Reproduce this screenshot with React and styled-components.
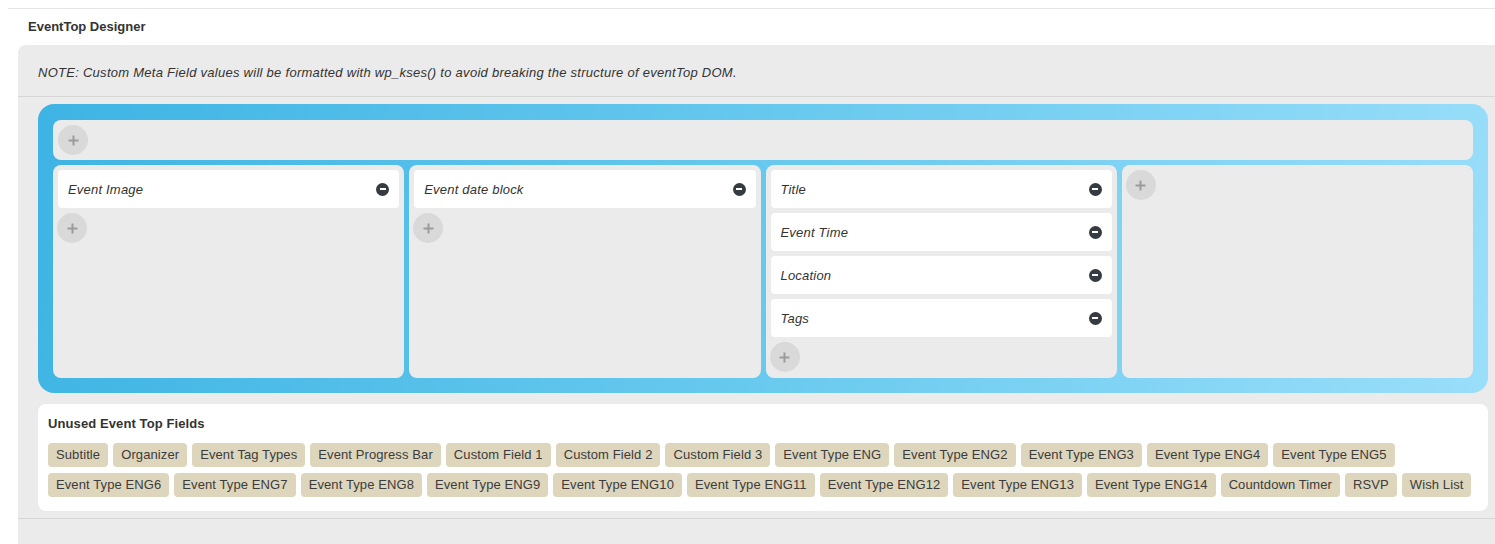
import React from 'react';
import styled, { createGlobalStyle } from 'styled-components';

const GlobalStyle = createGlobalStyle`
  body {
    margin: 0;
    background: #fff;
    font-family: "Liberation Sans", Arial, sans-serif;
    color: #333;
  }
`;

const Page = styled.div`
  padding: 8px 0 0 8px;
`;

const Section = styled.div`
  border-top: 1px solid #e6e6e6;
`;

const Heading = styled.h3`
  margin: 0;
  padding: 0 0 0 20px;
  height: 36px;
  line-height: 35px;
  font-size: 13px;
  font-weight: bold;
  color: #333;
`;

const Panel = styled.div`
  margin-left: 10px;
  background: #ebebeb;
  border-top-left-radius: 8px;
`;

const Note = styled.p`
  margin: 0;
  padding: 20px 20px 15px;
  line-height: 16px;
  font-size: 13px;
  font-style: italic;
  letter-spacing: 0.27px;
  color: #333;
  border-bottom: 1px solid #d6d6d6;
`;

const Body = styled.div`
  padding: 7px 7px 7px 20px;
  border-bottom: 1px solid #d6d6d6;
`;

const Designer = styled.div`
  padding: 16px 15px 15px;
  border-radius: 16px;
  background: linear-gradient(100deg, #3eb4e4 0%, #6ccbef 55%, #9adefa 100%);
`;

const TopRow = styled.div`
  display: flex;
  padding: 5px;
  border-radius: 8px;
  background: #ebebeb;
`;

const Columns = styled.div`
  display: grid;
  grid-template-columns: repeat(4, 1fr);
  gap: 5px;
  margin-top: 5px;
`;

const Column = styled.div`
  display: flex;
  flex-direction: column;
  align-items: flex-start;
  gap: 5px;
  padding: 5px 5px 5px 4px;
  min-height: 203px;
  border-radius: 8px;
  background: #ebebeb;
`;

const Field = styled.div`
  display: flex;
  align-items: center;
  justify-content: space-between;
  align-self: stretch;
  height: 38px;
  margin-left: 1px;
  padding: 0 10px 0 10px;
  border-radius: 4px;
  background: #fff;
  font-size: 13px;
  font-style: italic;
  letter-spacing: 0.2px;
  color: #333;
`;

const Minus = styled.span`
  position: relative;
  width: 13px;
  height: 13px;
  border-radius: 50%;
  background: #363b42;

  &:after {
    content: '';
    position: absolute;
    left: 3.5px;
    top: 5.5px;
    width: 6px;
    height: 2px;
    background: #fff;
  }
`;

const AddButton = styled.span`
  display: flex;
  align-items: center;
  justify-content: center;
  width: 30px;
  height: 30px;
  border-radius: 50%;
  background: #d9d9d9;
`;

const Unused = styled.div`
  margin-top: 11px;
  padding: 12px 10px 14px;
  border-radius: 8px;
  background: #fff;
`;

const UnusedTitle = styled.div`
  font-size: 13px;
  font-weight: bold;
  line-height: 16px;
  letter-spacing: 0.1px;
  color: #333;
  margin-bottom: 11px;
`;

const TagRow = styled.div`
  display: flex;
  gap: 5px;
  & + & {
    margin-top: 6px;
  }
`;

const Tag = styled.span`
  height: 24px;
  line-height: 24px;
  padding: 0 8px;
  border-radius: 4px;
  background: #ddd5bc;
  font-size: 13px;
  letter-spacing: 0.1px;
  color: #3c3c3c;
  white-space: nowrap;
`;

const Foot = styled.div`
  height: 26px;
`;

const Plus = () => (
  <AddButton>
    <svg width="11" height="11" viewBox="0 0 11 11">
      <path d="M5.5 0.5v10M0.5 5.5h10" stroke="#9b9b9b" strokeWidth="2" />
    </svg>
  </AddButton>
);

const columns = [
  ['Event Image'],
  ['Event date block'],
  ['Title', 'Event Time', 'Location', 'Tags'],
  [],
];

const tagRows = [
  [
    'Subtitle', 'Organizer', 'Event Tag Types', 'Event Progress Bar', 'Custom Field 1',
    'Custom Field 2', 'Custom Field 3', 'Event Type ENG', 'Event Type ENG2',
    'Event Type ENG3', 'Event Type ENG4', 'Event Type ENG5',
  ],
  [
    'Event Type ENG6', 'Event Type ENG7', 'Event Type ENG8', 'Event Type ENG9',
    'Event Type ENG10', 'Event Type ENG11', 'Event Type ENG12', 'Event Type ENG13',
    'Event Type ENG14', 'Countdown Timer', 'RSVP', 'Wish List',
  ],
];

const App = () => (
  <Page>
    <GlobalStyle />
    <Section>
      <Heading>EventTop Designer</Heading>
      <Panel>
        <Note>
          NOTE: Custom Meta Field values will be formatted with wp_kses() to avoid breaking the structure of eventTop DOM.
        </Note>
        <Body>
          <Designer>
            <TopRow>
              <Plus />
            </TopRow>
            <Columns>
              {columns.map((fields, i) => (
                <Column key={i}>
                  {fields.map(f => (
                    <Field key={f}>
                      {f}
                      <Minus />
                    </Field>
                  ))}
                  <Plus />
                </Column>
              ))}
            </Columns>
          </Designer>
          <Unused>
            <UnusedTitle>Unused Event Top Fields</UnusedTitle>
            {tagRows.map((row, i) => (
              <TagRow key={i}>
                {row.map(t => <Tag key={t}>{t}</Tag>)}
              </TagRow>
            ))}
          </Unused>
        </Body>
        <Foot />
      </Panel>
    </Section>
  </Page>
);

export default App;
